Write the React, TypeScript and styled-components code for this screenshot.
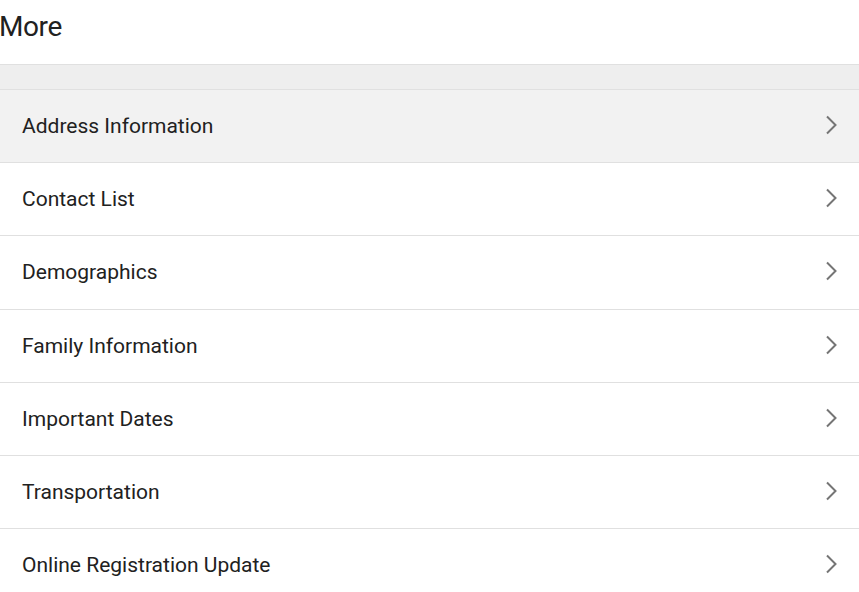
import React from "react";
import styled, { createGlobalStyle } from "styled-components";

const GlobalStyle = createGlobalStyle`
  html, body {
    margin: 0;
    padding: 0;
    background: #ffffff;
    font-family: Roboto, "Liberation Sans", Arial, sans-serif;
    color: #212121;
  }
`;

const Page = styled.div`
  width: 859px;
  display: flex;
  flex-direction: column;
`;

const Header = styled.header`
  height: 64px;
  display: flex;
  align-items: flex-start;
`;

const Title = styled.h1`
  margin: 0 0 0 -1px;
  padding-top: 10px;
  font-size: 28px;
  line-height: 33px;
  font-weight: 400;
  color: #212121;
  letter-spacing: -0.4px;
`;

const Band = styled.div`
  height: 24px;
  background: #eeeeee;
  border-top: 1px solid #e0e0e0;
`;

const List = styled.ul`
  list-style: none;
  margin: 0;
  padding: 0;
`;

const Row = styled.li<{ $active?: boolean }>`
  height: 72.2px;
  border-top: 1px solid #e0e0e0;
  background: ${(p) => (p.$active ? "#f2f2f2" : "#ffffff")};
  display: flex;
  align-items: center;
  justify-content: space-between;
  padding: 0 22px;
  cursor: pointer;
`;

const Label = styled.span`
  font-size: 21px;
  line-height: 24px;
  color: #212121;
`;

const Chevron = styled.svg`
  width: 14px;
  height: 20px;
  flex: none;
  margin: -2px -1px 0 0;
`;

const items = [
  "Address Information",
  "Contact List",
  "Demographics",
  "Family Information",
  "Important Dates",
  "Transportation",
  "Online Registration Update",
];

export default function App() {
  return (
    <>
      <GlobalStyle />
      <Page>
        <Header>
          <Title>More</Title>
        </Header>
        <Band />
        <List>
          {items.map((label, i) => (
            <Row key={label} $active={i === 0}>
              <Label>{label}</Label>
              <Chevron viewBox="0 0 14 20" aria-hidden="true">
                <polyline
                  points="3,1.5 11.5,10 3,18.5"
                  fill="none"
                  stroke="#757575"
                  strokeWidth="2"
                />
              </Chevron>
            </Row>
          ))}
        </List>
      </Page>
    </>
  );
}
